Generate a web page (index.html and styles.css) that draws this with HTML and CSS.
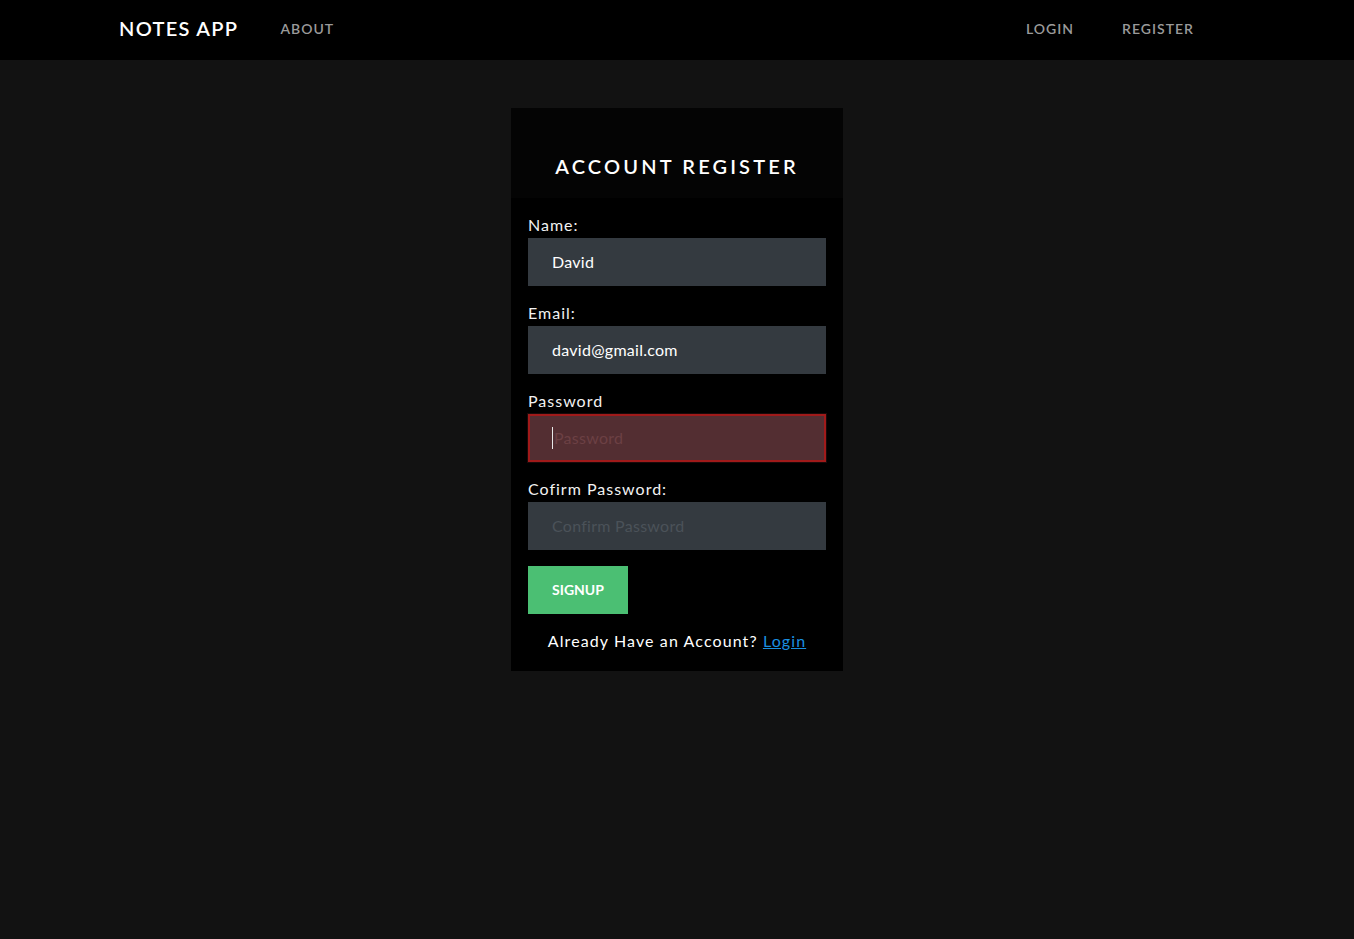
FILE: index.html
```html
<!DOCTYPE html>
<html lang="en">
<head>
<meta charset="utf-8">
<title>Notes App</title>
<link rel="stylesheet" href="styles.css">
</head>
<body>
<nav class="navbar">
  <div class="nav-inner">
    <a class="brand" href="#">Notes App</a>
    <a class="nav-link" href="#">About</a>
    <div class="nav-right">
      <a class="nav-link" href="#">Login</a>
      <a class="nav-link" href="#">Register</a>
    </div>
  </div>
</nav>
<main class="main">
  <div class="card">
    <div class="card-header">
      <h3 class="card-title">Account Register</h3>
    </div>
    <form class="card-body">
      <div class="group">
        <label class="label">Name:</label>
        <input class="input" type="text" value="David">
      </div>
      <div class="group">
        <label class="label">Email:</label>
        <input class="input" type="email" value="david@gmail.com">
      </div>
      <div class="group">
        <label class="label">Password</label>
        <div class="input input-focus"><span class="caret"></span><span class="ph">Password</span></div>
      </div>
      <div class="group">
        <label class="label">Cofirm Password:</label>
        <input class="input" type="password" placeholder="Confirm Password">
      </div>
      <button class="btn" type="button">Signup</button>
      <p class="foot">Already Have an Account? <a href="#" class="link">Login</a></p>
    </form>
  </div>
</main>
</body>
</html>
```

FILE: styles.css
```css
* { box-sizing: border-box; }
html, body { margin: 0; padding: 0; }
body {
  background: #121212;
  font-family: "Lato", "Open Sans", sans-serif;
  color: #fff;
  min-height: 939px;
}
.navbar {
  background: #000;
  height: 60px;
}
.nav-inner {
  width: 1140px;
  margin: 0 auto;
  padding: 0 12px 4px;
  height: 60px;
  display: flex;
  align-items: center;
}
.brand {
  color: #fff;
  text-decoration: none;
  text-transform: uppercase;
  font-size: 20px;
  font-weight: 600;
  letter-spacing: 1.3px;
  margin-right: 42px;
}
.nav-link {
  color: #9a9a9a;
  text-decoration: none;
  text-transform: uppercase;
  font-size: 14px;
  font-weight: 600;
  letter-spacing: 1px;
}
.nav-right {
  margin-left: auto;
  margin-right: 41px;
  display: flex;
  gap: 48px;
}
.main {
  display: flex;
  justify-content: center;
  padding-top: 48px;
}
.card {
  width: 332px;
  background: #000;
}
.card-header {
  background: #040404;
  height: 90px;
  padding-top: 46px;
}
.card-title {
  margin: 0;
  text-align: center;
  text-transform: uppercase;
  font-size: 20px;
  font-weight: 600;
  letter-spacing: 3.15px;
  line-height: 24px;
}
.card-body {
  padding: 16px 17px 18px;
  margin: 0;
}
.group {
  margin-bottom: 16px;
}
.label {
  display: block;
  font-size: 16px;
  line-height: 22px;
  padding-bottom: 2px;
  letter-spacing: 1px;
  color: #f2f2f2;
}
.input {
  display: block;
  width: 100%;
  height: 48px;
  background: #343a40;
  border: none;
  outline: none;
  color: #fff;
  font-family: inherit;
  font-size: 16px;
  letter-spacing: 0.27px;
  padding: 0 24px 2px;
}
.input::placeholder { color: #4b5259; }
.input-focus {
  background: #532e32;
  border: 2px solid #a01a1a;
  box-shadow: 0 0 0 1px #1a0a0a;
  padding: 0 0 0 22px;
  display: flex;
  align-items: center;
}
.caret {
  width: 1px;
  height: 22px;
  background: #e8e8e8;
  margin-right: 1px;
}
.ph { color: #6c4044; margin-top: -1px; }
.btn {
  display: block;
  width: 100px;
  height: 48px;
  background: #4bbf73;
  border: none;
  color: #fff;
  font-family: inherit;
  font-size: 14px;
  font-weight: 700;
  text-transform: uppercase;
  padding: 0 0 2px;
}
.foot {
  margin: 15px 0 0;
  text-align: center;
  font-size: 16px;
  line-height: 24px;
  letter-spacing: 1.1px;
}
.link { color: #1a8fe0; }
```
